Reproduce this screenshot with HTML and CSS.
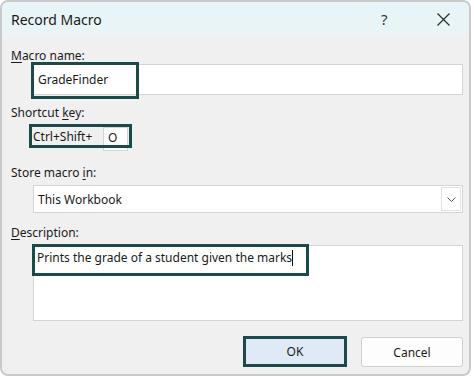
FILE: index.html
```html
<!DOCTYPE html>
<html>
<head>
<meta charset="utf-8">
<link rel="stylesheet" href="styles.css">
</head>
<body>
<div class="dialog">
  <div class="titlebar">
    <span class="title">Record Macro</span>
    <span class="help">?</span>
    <svg class="close" width="13" height="13" viewBox="0 0 13 13"><path d="M0.5 0.5 L12.5 12.5 M12.5 0.5 L0.5 12.5" stroke="#2b2b2b" stroke-width="1.2" fill="none"/></svg>
  </div>
  <div class="content">
    <div class="label l-macro"><u>M</u>acro name:</div>
    <div class="input name-input"><span>GradeFinder</span><div class="hl hl-name"></div></div>

    <div class="label l-short">Shortcut <u>k</u>ey:</div>
    <div class="shortcut">
      <span class="ctrl">Ctrl+Shift+</span>
      <span class="keybox">O</span>
      <div class="hl hl-short"></div>
    </div>

    <div class="label l-store">Store macro <u>i</u>n:</div>
    <div class="input combo"><span class="combo-text">This Workbook</span>
      <span class="drop"><svg width="9" height="5" viewBox="0 0 9 5"><path d="M0.5 0.5 L4.5 4.5 L8.5 0.5" stroke="#555" stroke-width="1" fill="none"/></svg></span>
    </div>

    <div class="label l-desc"><u>D</u>escription:</div>
    <div class="textarea"><span class="desc-text">Prints the grade of a student given the marks</span><span class="caret"></span><div class="hl hl-desc"></div></div>

    <div class="buttons">
      <div class="btn ok">OK</div>
      <div class="btn cancel">Cancel</div>
    </div>
  </div>
</div>
</body>
</html>
```

FILE: styles.css
```css
* { box-sizing: border-box; }
html, body { margin: 0; padding: 0; background: #ffffff; }
body { font-family: "Noto Sans", "Open Sans", sans-serif; color: #1a1a1a; }

.dialog {
  width: 471px;
  height: 376px;
  border: 2px solid #c9c9c9;
  border-radius: 8px;
  overflow: hidden;
  background: #f0f0f0;
}

.titlebar {
  height: 38px;
  display: flex;
  align-items: center;
  background: linear-gradient(to bottom, #e8f4f7 0%, #e9f4f7 75%, #f0f0f0 100%);
  padding-left: 9px;
  padding-bottom: 4px;
}
.title { font-size: 14px; color: #1a1a1a; flex: 1; }
.help { font-size: 15px; color: #333; width: 56px; }
.close { margin-right: 19px; }

.content { padding-left: 9px; }

.label { font-size: 12px; line-height: 16px; height: 16px; color: #1a1a1a; }
.label u { text-decoration-thickness: 1px; text-underline-offset: 2px; }
.l-macro { margin-top: 8px; }
.l-short { margin-top: 10px; }
.l-store { margin-top: 17px; }
.l-desc { margin-top: 12px; }

.input {
  position: relative;
  margin-left: 22px;
  width: 430px;
  background: #fff;
  border: 1px solid #d4d4d4;
  font-size: 12px;
  display: flex;
  align-items: center;
  padding-left: 4px;
}
.name-input { height: 31px; }

.hl { position: absolute; border: 3px solid #1c4a4b; }
.hl-name { left: -3px; top: -3px; width: 108px; height: 37px; }

.shortcut {
  position: relative;
  margin-top: 3px;
  margin-left: 18px;
  height: 24px;
  width: 103px;
  display: flex;
  align-items: center;
  font-size: 12px;
}
.ctrl { margin-left: 4px; }
.keybox {
  position: absolute;
  left: 74px;
  top: 3px;
  width: 25px;
  height: 24px;
  background: #fff;
  border: 1px solid #d4d4d4;
  padding-left: 4px;
  line-height: 20px;
}
.hl-short { left: 0; top: 0; width: 103px; height: 24px; }

.combo { height: 28px; margin-top: 4px; justify-content: space-between; padding-right: 1px; }
.drop {
  width: 20px;
  height: 24px;
  border: 1px solid #e2e2e2;
  display: flex;
  align-items: center;
  justify-content: center;
}

.textarea {
  position: relative;
  margin-top: 4px;
  margin-left: 22px;
  width: 430px;
  height: 76px;
  background: #fff;
  border: 1px solid #d4d4d4;
  font-size: 12px;
  line-height: 16px;
  padding: 4px 0 0 3px;
}
.caret { display: inline-block; width: 1px; height: 16px; background: #111; vertical-align: -4px; }
.hl-desc { left: -2px; top: -2px; width: 277px; height: 32px; }

.buttons { display: flex; margin-top: 15px; margin-left: 232px; gap: 14px; }
.btn {
  height: 31px;
  font-size: 12px;
  display: flex;
  align-items: center;
  justify-content: center;
  border-radius: 3px;
}
.ok { width: 104px; background: #dfeaf6; border: 3px solid #1c4a4b; border-radius: 0; }
.cancel { width: 102px; height: 30px; margin-top: 1px; background: #fdfdfd; border: 1px solid #d0d0d0; }
```
